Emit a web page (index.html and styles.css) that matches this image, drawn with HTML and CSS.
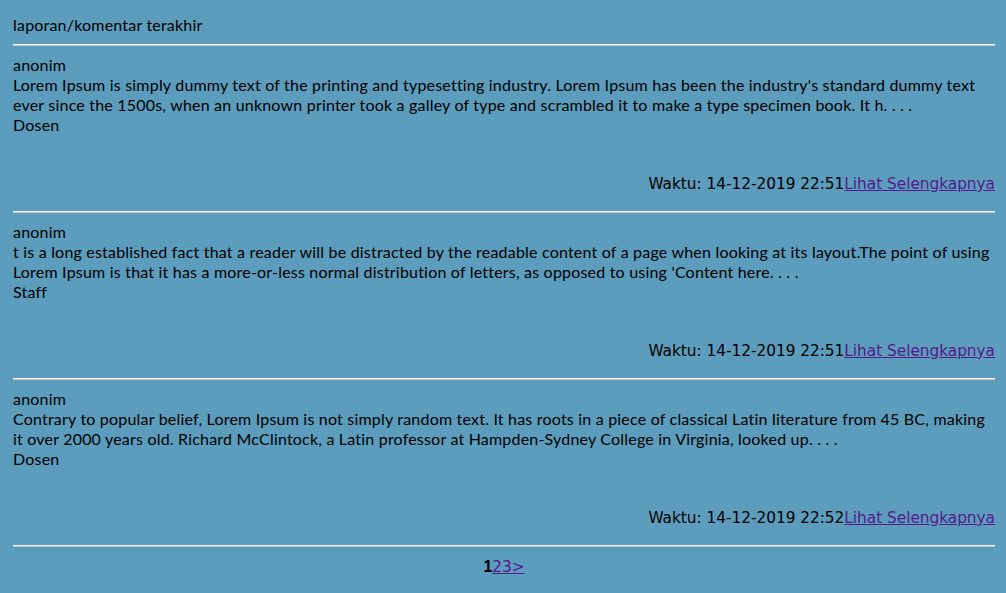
FILE: index.html
```html
<!DOCTYPE html>
<html>
<head>
<meta charset="utf-8">
<link rel="stylesheet" href="styles.css">
</head>
<body>
<div class="page">
  <div class="title">laporan/komentar terakhir</div>
  <hr class="sep">
  <div class="item">
    <div class="who">anonim</div>
    <div class="text">Lorem Ipsum is simply dummy text of the printing and typesetting industry. Lorem Ipsum has been the industry's standard dummy text ever since the 1500s, when an unknown printer took a galley of type and scrambled it to make a type specimen book. It h. . . .</div>
    <div class="role">Dosen</div>
    <div class="meta">Waktu: 14-12-2019 22:51<a href="#" class="more">Lihat Selengkapnya</a></div>
  </div>
  <hr class="sep">
  <div class="item">
    <div class="who">anonim</div>
    <div class="text">t is a long established fact that a reader will be distracted by the readable content of a page when looking at its layout.The point of using Lorem Ipsum is that it has a more-or-less normal distribution of letters, as opposed to using 'Content here. . . .</div>
    <div class="role">Staff</div>
    <div class="meta">Waktu: 14-12-2019 22:51<a href="#" class="more">Lihat Selengkapnya</a></div>
  </div>
  <hr class="sep">
  <div class="item">
    <div class="who">anonim</div>
    <div class="text">Contrary to popular belief, Lorem Ipsum is not simply random text. It has roots in a piece of classical Latin literature from 45 BC, making it over 2000 years old. Richard McClintock, a Latin professor at Hampden-Sydney College in Virginia, looked up. . . .</div>
    <div class="role">Dosen</div>
    <div class="meta">Waktu: 14-12-2019 22:52<a href="#" class="more">Lihat Selengkapnya</a></div>
  </div>
  <hr class="sep">
  <div class="pager"><b class="cur">1</b><a href="#" class="pg">2</a><a href="#" class="pg">3</a><a href="#" class="pg">&gt;</a></div>
</div>
</body>
</html>
```
FILE: styles.css
```css
html, body {
  margin: 0;
  padding: 0;
  background: #5c9cbc;
}
.page {
  padding: 15px 11px 0 13px;
  font-family: "Lato", "Liberation Sans", sans-serif;
  font-size: 16px;
  letter-spacing: 0.2px;
  line-height: 20px;
  color: #000;
}
.title {
  height: 20px;
}
.sep {
  border: 0;
  border-top: 1px solid #f2f2f2;
  border-bottom: 1px solid #c4c4c4;
  height: 0;
  margin: 9px 0;
}
.meta {
  margin-top: 39px;
  margin-bottom: 17px;
  text-align: right;
  font-family: "DejaVu Sans", sans-serif;
  font-size: 15.3px;
  letter-spacing: 0;
}
.more {
  color: #551a8b;
}
.pager {
  text-align: center;
}
.cur {
  font-family: "Liberation Sans", sans-serif;
  font-weight: bold;
  letter-spacing: 0;
}
.pg {
  color: #551a8b;
  font-family: "DejaVu Sans", sans-serif;
  font-size: 15.3px;
  letter-spacing: 0;
}
```
